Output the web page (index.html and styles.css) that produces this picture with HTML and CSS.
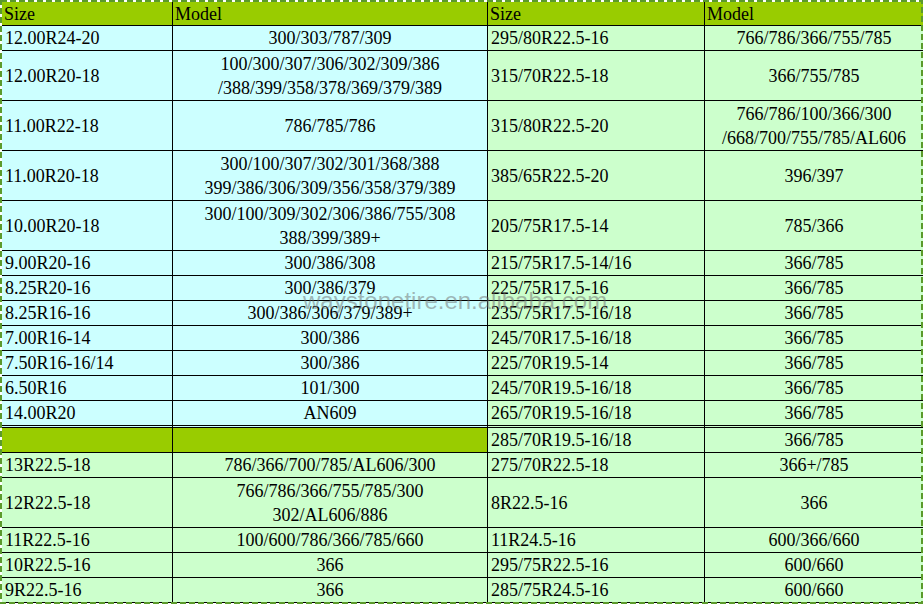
FILE: index.html
```html
<!DOCTYPE html>
<html>
<head>
<meta charset="utf-8">
<link rel="stylesheet" href="styles.css">
</head>
<body>
<div class="sheet">
<table class="grid">
<colgroup><col class="c1"><col class="c2"><col class="c3"><col class="c4"></colgroup>
<tr class="head"><td>Size</td><td>Model</td><td>Size</td><td class="last">Model</td></tr>
<tr class="r1"><td class="sz cy">12.00R24-20</td><td class="md cy">300/303/787/309</td><td class="sz gr">295/80R22.5-16</td><td class="md gr last">766/786/366/755/785</td></tr>
<tr class="r2"><td class="sz cy">12.00R20-18</td><td class="md cy">100/300/307/306/302/309/386<br>/388/399/358/378/369/379/389</td><td class="sz gr">315/70R22.5-18</td><td class="md gr last">366/755/785</td></tr>
<tr class="r2"><td class="sz cy">11.00R22-18</td><td class="md cy">786/785/786</td><td class="sz gr">315/80R22.5-20</td><td class="md gr last">766/786/100/366/300<br>/668/700/755/785/AL606</td></tr>
<tr class="r2"><td class="sz cy">11.00R20-18</td><td class="md cy">300/100/307/302/301/368/388<br>399/386/306/309/356/358/379/389</td><td class="sz gr">385/65R22.5-20</td><td class="md gr last">396/397</td></tr>
<tr class="r2"><td class="sz cy">10.00R20-18</td><td class="md cy">300/100/309/302/306/386/755/308<br>388/399/389+</td><td class="sz gr">205/75R17.5-14</td><td class="md gr last">785/366</td></tr>
<tr class="r1"><td class="sz cy">9.00R20-16</td><td class="md cy">300/386/308</td><td class="sz gr">215/75R17.5-14/16</td><td class="md gr last">366/785</td></tr>
<tr class="r1"><td class="sz cy">8.25R20-16</td><td class="md cy">300/386/379</td><td class="sz gr">225/75R17.5-16</td><td class="md gr last">366/785</td></tr>
<tr class="r1"><td class="sz cy">8.25R16-16</td><td class="md cy">300/386/306/379/389+</td><td class="sz gr">235/75R17.5-16/18</td><td class="md gr last">366/785</td></tr>
<tr class="r1"><td class="sz cy">7.00R16-14</td><td class="md cy">300/386</td><td class="sz gr">245/70R17.5-16/18</td><td class="md gr last">366/785</td></tr>
<tr class="r1"><td class="sz cy">7.50R16-16/14</td><td class="md cy">300/386</td><td class="sz gr">225/70R19.5-14</td><td class="md gr last">366/785</td></tr>
<tr class="r1"><td class="sz cy">6.50R16</td><td class="md cy">101/300</td><td class="sz gr">245/70R19.5-16/18</td><td class="md gr last">366/785</td></tr>
<tr class="r1 dbl"><td class="sz cy">14.00R20</td><td class="md cy">AN609</td><td class="sz gr">265/70R19.5-16/18</td><td class="md gr last">366/785</td></tr>
<tr class="r1"><td class="sz hg"></td><td class="md hg"></td><td class="sz gr">285/70R19.5-16/18</td><td class="md gr last">366/785</td></tr>
<tr class="r1"><td class="sz gr">13R22.5-18</td><td class="md gr">786/366/700/785/AL606/300</td><td class="sz gr">275/70R22.5-18</td><td class="md gr last">366+/785</td></tr>
<tr class="r2"><td class="sz gr">12R22.5-18</td><td class="md gr">766/786/366/755/785/300<br>302/AL606/886</td><td class="sz gr">8R22.5-16</td><td class="md gr last">366</td></tr>
<tr class="r1"><td class="sz gr">11R22.5-16</td><td class="md gr">100/600/786/366/785/660</td><td class="sz gr">11R24.5-16</td><td class="md gr last">600/366/660</td></tr>
<tr class="r1"><td class="sz gr">10R22.5-16</td><td class="md gr">366</td><td class="sz gr">295/75R22.5-16</td><td class="md gr last">600/660</td></tr>
<tr class="r1"><td class="sz gr">9R22.5-16</td><td class="md gr">366</td><td class="sz gr">285/75R24.5-16</td><td class="md gr last">600/660</td></tr>
</table>
<div class="watermark">waystonetire.en.alibaba.com</div>
<svg class="frame" width="923" height="604" viewBox="0 0 923 604"><rect x="1" y="1" width="921" height="602" fill="none" stroke="#5b9a2b" stroke-width="2" stroke-dasharray="6 3"/></svg>
</div>
</body>
</html>
```
FILE: styles.css
```css
html, body {
  margin: 0;
  padding: 0;
  background: #ffffff;
}
.sheet {
  position: relative;
  width: 923px;
  height: 604px;
  overflow: hidden;
  padding: 2px 0 0 2px;
  box-sizing: border-box;
  background: #ffffff;
}
.grid {
  border-collapse: separate;
  border-spacing: 0;
  table-layout: fixed;
  width: 921px;
  font-family: "Liberation Serif", "Times New Roman", serif;
  font-size: 18px;
  color: #000;
}
.c1 { width: 171px; }
.c2 { width: 315px; }
.c3 { width: 217px; }
.c4 { width: 218px; }
.grid td {
  box-sizing: border-box;
  padding: 1px 0 0 3px;
  border-right: 1px solid #000;
  border-bottom: 1px solid #000;
  white-space: nowrap;
  vertical-align: middle;
  overflow: hidden;
}
.grid td.last { border-right: none; }
.head td {
  background: #99cc00;
  height: 24px;
  line-height: 22px;
  padding-left: 2px;
}
.r1 td {
  height: 25px;
  line-height: 23px;
}
.r2 td {
  height: 50px;
  line-height: 24px;
}
.dbl td {
  height: 27px;
  border-bottom: 3px double #000;
}
.grid td.md { text-align: center; padding-left: 0; }
.cy { background: #ccffff; }
.gr { background: #ccffcc; }
.hg { background: #99cc00; }
.watermark {
  position: absolute;
  left: 303px;
  top: 287px;
  font-family: "Liberation Sans", Arial, sans-serif;
  font-size: 24px;
  line-height: 28px;
  color: rgba(110, 110, 110, 0.5);
  white-space: nowrap;
}
.frame {
  position: absolute;
  left: 0;
  top: 0;
  pointer-events: none;
}
```
